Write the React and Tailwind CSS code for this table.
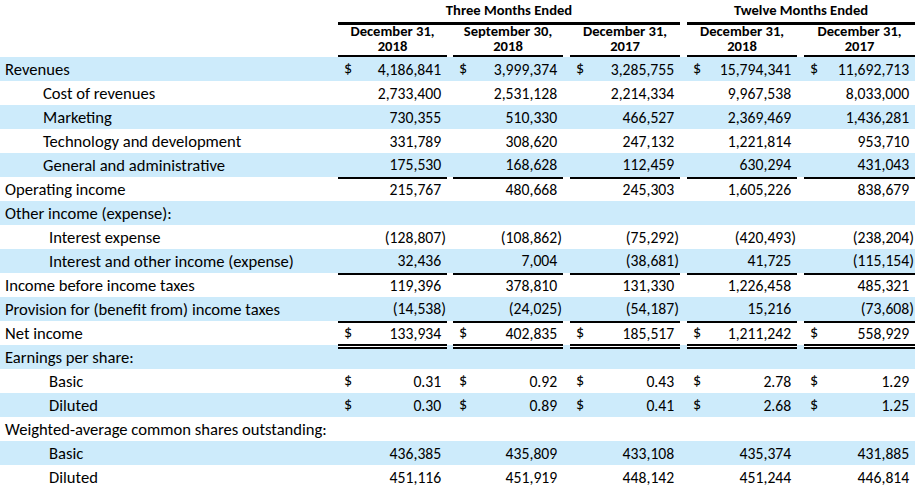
const rows = [
  { label: "Revenues", indent: 0, dollar: true, vals: ["4,186,841", "3,999,374", "3,285,755", "15,794,341", "11,692,713"] },
  { label: "Cost of revenues", indent: 1, vals: ["2,733,400", "2,531,128", "2,214,334", "9,967,538", "8,033,000"] },
  { label: "Marketing", indent: 1, vals: ["730,355", "510,330", "466,527", "2,369,469", "1,436,281"] },
  { label: "Technology and development", indent: 1, vals: ["331,789", "308,620", "247,132", "1,221,814", "953,710"] },
  { label: "General and administrative", indent: 1, under: "single", vals: ["175,530", "168,628", "112,459", "630,294", "431,043"] },
  { label: "Operating income", indent: 0, vals: ["215,767", "480,668", "245,303", "1,605,226", "838,679"] },
  { label: "Other income (expense):", indent: 0, vals: null },
  { label: "Interest expense", indent: 2, vals: ["(128,807)", "(108,862)", "(75,292)", "(420,493)", "(238,204)"] },
  { label: "Interest and other income (expense)", indent: 2, under: "single", vals: ["32,436", "7,004", "(38,681)", "41,725", "(115,154)"] },
  { label: "Income before income taxes", indent: 0, vals: ["119,396", "378,810", "131,330", "1,226,458", "485,321"] },
  { label: "Provision for (benefit from) income taxes", indent: 0, under: "single", vals: ["(14,538)", "(24,025)", "(54,187)", "15,216", "(73,608)"] },
  { label: "Net income", indent: 0, dollar: true, under: "double", vals: ["133,934", "402,835", "185,517", "1,211,242", "558,929"] },
  { label: "Earnings per share:", indent: 0, vals: null },
  { label: "Basic", indent: 2, dollar: true, vals: ["0.31", "0.92", "0.43", "2.78", "1.29"] },
  { label: "Diluted", indent: 2, dollar: true, vals: ["0.30", "0.89", "0.41", "2.68", "1.25"] },
  { label: "Weighted-average common shares outstanding:", indent: 0, vals: null },
  { label: "Basic", indent: 2, vals: ["436,385", "435,809", "433,108", "435,374", "431,885"] },
  { label: "Diluted", indent: 2, vals: ["451,116", "451,919", "448,142", "451,244", "446,814"] },
];

const colGap = ["mr-[6px]", "mr-[7px]", "mr-[7px]", "mr-[7px]", "mr-0"];
const indents = ["pl-[5px]", "pl-[43px]", "pl-[49px]"];
const gridCols = "grid grid-cols-[338px_115px_117px_117px_117px_111px]";

const Num = ({ value }) => {
  const neg = value.startsWith("(");
  return (
    <span>
      {value}
      {!neg && <span className="invisible">)</span>}
    </span>
  );
};

const Row = ({ row, index }) => {
  const bg = index % 2 === 0 ? "bg-[#cdebfb]" : "bg-white";
  return (
    <div className={`${gridCols} h-[24px] ${bg}`}>
      <div className={`flex items-center ${indents[row.indent]} whitespace-nowrap text-[16.6px]`}>{row.label}</div>
      {[0, 1, 2, 3, 4].map((i) => (
        <div
          key={i}
          className={`relative flex items-center justify-between pl-[6px] pr-[1px] text-[15.7px] ${colGap[i]} ${
            row.under === "single" ? "border-b-2 border-black" : ""
          }`}
        >
          <span className="text-[16px]">{row.vals && row.dollar ? "$" : ""}</span>
          {row.vals && <Num value={row.vals[i]} />}
          {row.under === "double" && (
            <span className="absolute left-0 right-0 -bottom-[3px] h-[5px] border-y-2 border-black bg-white" />
          )}
        </div>
      ))}
    </div>
  );
};

const ColHead = ({ top, bottom, gap }) => (
  <div className={`flex flex-col items-center justify-center border-b-2 border-black leading-[15px] ${gap}`}>
    <span>{top}</span>
    <span>{bottom}</span>
  </div>
);

export default function App() {
  return (
    <div className="w-[915px] h-[490px] overflow-hidden bg-white text-black font-['Carlito','Lato','Liberation_Sans',sans-serif]">
      <div className="font-bold text-[14.6px]">
        <div className={`${gridCols} h-[23px]`}>
          <div />
          <div className="col-span-3 mr-[7px] border-b-[3px] border-black flex items-center justify-center">
            Three Months Ended
          </div>
          <div className="col-span-2 border-b-[3px] border-black flex items-center justify-center">
            Twelve Months Ended
          </div>
        </div>
        <div className={`${gridCols} h-[34px]`}>
          <div />
          <ColHead top="December 31," bottom="2018" gap={colGap[0]} />
          <ColHead top="September 30," bottom="2018" gap={colGap[1]} />
          <ColHead top="December 31," bottom="2017" gap={colGap[2]} />
          <ColHead top="December 31," bottom="2018" gap={colGap[3]} />
          <ColHead top="December 31," bottom="2017" gap={colGap[4]} />
        </div>
      </div>
      {rows.map((row, i) => (
        <Row key={i} row={row} index={i} />
      ))}
    </div>
  );
}
